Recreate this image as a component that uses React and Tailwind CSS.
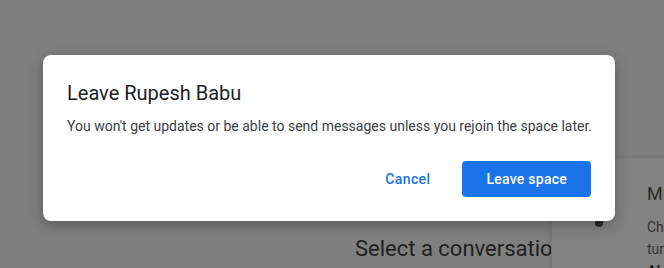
import React from 'react';

const font = { fontFamily: 'Roboto, "Liberation Sans", sans-serif' };

function BackdropCard() {
  return (
    <div className="absolute left-[551px] top-[157px] w-[120px] h-[130px] bg-[#828282] border-l border-t border-[#777] shadow-[-2px_-1px_3px_rgba(0,0,0,0.08)]">
      <div className="pl-[95px] pt-[24px] flex flex-col text-[#2a2a2a] whitespace-nowrap">
        <span className="text-[18px] leading-[24px]">Mi</span>
        <span className="text-[14px] leading-[22px] mt-[10px] text-[#333]">Ch</span>
        <span className="text-[14px] leading-[22px] text-[#333]">tur</span>
        <span className="text-[14px] leading-[22px] font-bold text-[#222]">Al</span>
      </div>
    </div>
  );
}

export default function App() {
  return (
    <div className="relative w-[664px] h-[268px] overflow-hidden bg-[#7f7f7f]" style={font}>
      {/* page behind the scrim */}
      <div className="absolute left-[355px] top-[233px] text-[22px] leading-[32px] text-[#1f1f1f] whitespace-nowrap">
        Select a conversation
      </div>
      <BackdropCard />
      <div className="absolute left-[595px] top-[221px] w-[8px] h-[6px] rounded-b-full bg-[#2b2b2b]" />

      {/* dialog */}
      <div
        role="dialog"
        className="absolute left-[43px] top-[55px] w-[572px] rounded-[8px] bg-white px-6 pt-6 pb-6 shadow-[0_4px_14px_rgba(0,0,0,0.3)]"
      >
        <h2 className="text-[20px] leading-[28px] text-[#202124] font-normal">Leave Rupesh Babu</h2>
        <p className="mt-[9px] text-[14px] leading-[20px] text-[#3c4043] whitespace-nowrap">
          You won't get updates or be able to send messages unless you rejoin the space later.
        </p>
        <div className="mt-[25px] flex items-center justify-end gap-6">
          <button className="h-9 px-2 text-[14px] font-medium tracking-[0.4px] text-[#1a73e8] rounded">Cancel</button>
          <button className="h-9 px-6 text-[14px] font-medium tracking-[0.25px] text-white bg-[#1a73e8] rounded-[4px]">
            Leave space
          </button>
        </div>
      </div>
    </div>
  );
}
